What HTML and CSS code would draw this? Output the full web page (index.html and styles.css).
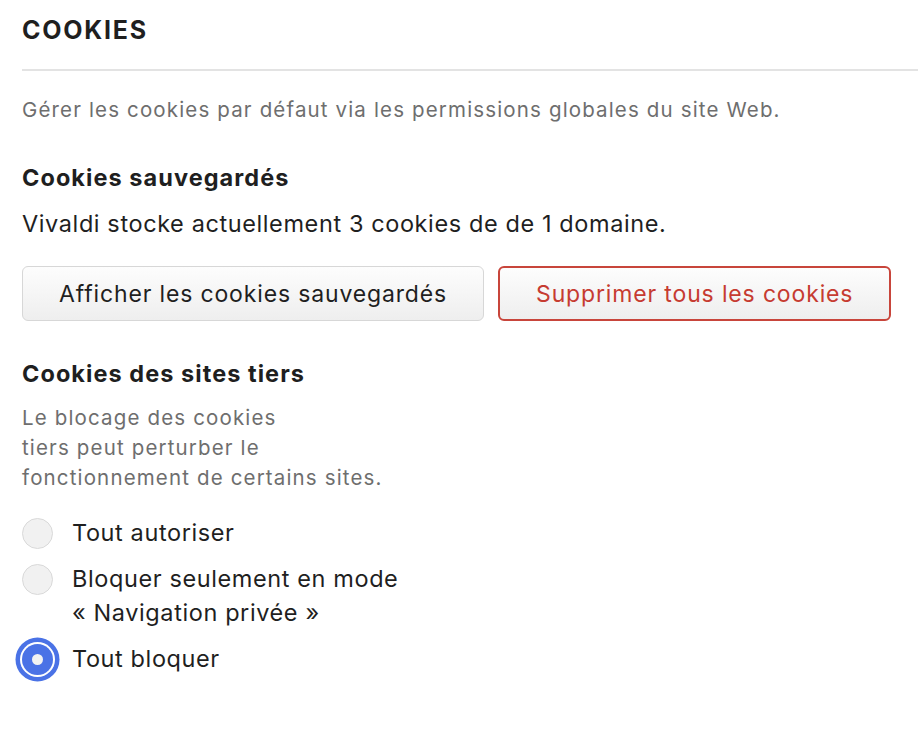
FILE: index.html
```html
<!DOCTYPE html>
<html lang="fr">
<head>
    <meta charset="UTF-8">
    <meta name="viewport" content="width=device-width, initial-scale=1.0">
    <title>Cookies</title>
    <link rel="stylesheet" href="styles.css">
</head>
<body>
    <div class="settings-page">
        <h1 class="section-title">COOKIES</h1>

        <p class="hint">Gérer les cookies par défaut via les permissions globales du site Web.</p>

        <!-- Saved cookies -->
        <h2>Cookies sauvegardés</h2>
        <p class="info">Vivaldi stocke actuellement 3 cookies de de 1 domaine.</p>
        <div class="button-row">
            <button class="btn">Afficher les cookies sauvegardés</button>
            <button class="btn danger">Supprimer tous les cookies</button>
        </div>

        <!-- Third party cookies -->
        <h2>Cookies des sites tiers</h2>
        <p class="hint block">Le blocage des cookies<br>tiers peut perturber le<br>fonctionnement de certains sites.</p>
        <div class="radio-list">
            <label class="radio-item">
                <input type="radio" name="third-party">
                <span>Tout autoriser</span>
            </label>
            <label class="radio-item">
                <input type="radio" name="third-party">
                <span>Bloquer seulement en mode<br>« Navigation privée »</span>
            </label>
            <label class="radio-item">
                <input type="radio" name="third-party" checked>
                <span>Tout bloquer</span>
            </label>
        </div>
    </div>
</body>
</html>
```

FILE: styles.css
```css
body {
    margin: 0;
    padding: 0;
    background: #fff;
    color: #1f1f1f;
    font-family: Inter, 'Noto Sans', sans-serif;
}

.settings-page {
    padding: 15px 0 40px 22px;
}

.section-title {
    font-size: 25px;
    line-height: 30px;
    font-weight: 700;
    letter-spacing: 1.75px;
    margin: 0;
    padding-bottom: 24px;
    border-bottom: 2px solid #e3e3e3;
}

.hint {
    color: #6e6e6e;
    font-size: 20.5px;
    line-height: 30px;
    letter-spacing: 1.15px;
    margin: 24px 0 0;
}

.hint.block {
    margin-top: 14px;
}

h2 {
    font-size: 23.5px;
    line-height: 30px;
    font-weight: 700;
    letter-spacing: 1.05px;
    margin: 38px 0 0;
}

.info {
    font-size: 23.5px;
    line-height: 30px;
    letter-spacing: 0.6px;
    margin: 16px 0 0;
}

.button-row {
    display: flex;
    gap: 14px;
    margin-top: 27px;
}

.btn {
    font-family: inherit;
    font-size: 23px;
    letter-spacing: 0.85px;
    color: #1f1f1f;
    height: 55px;
    padding: 0 36px;
    border: 1.5px solid #d7d7d7;
    border-radius: 6px;
    background: linear-gradient(#fdfdfd, #eeeeee);
}

.btn.danger {
    color: #c63b31;
    border: 2px solid #c8453b;
}

.radio-list {
    margin-top: 23px;
    display: flex;
    flex-direction: column;
    gap: 12px;
}

.radio-item {
    display: flex;
    align-items: flex-start;
    gap: 19px;
    font-size: 23.5px;
    line-height: 34px;
    letter-spacing: 0.6px;
}

.radio-item input {
    appearance: none;
    box-sizing: border-box;
    width: 31px;
    height: 31px;
    margin: 1.5px 0 0;
    border-radius: 50%;
    border: 1.5px solid #d9d9d9;
    background: #f1f1f1;
    flex-shrink: 0;
}

.radio-item input:checked {
    position: relative;
    border: none;
    background: #4a72e6;
    box-shadow: 0 0 0 2px #fff, 0 0 0 6.5px #4a72e6;
}

.radio-item input:checked::after {
    content: "";
    position: absolute;
    left: 50%;
    top: 50%;
    width: 11px;
    height: 11px;
    margin: -5.5px 0 0 -5.5px;
    border-radius: 50%;
    background: #f2f2f2;
}
```
